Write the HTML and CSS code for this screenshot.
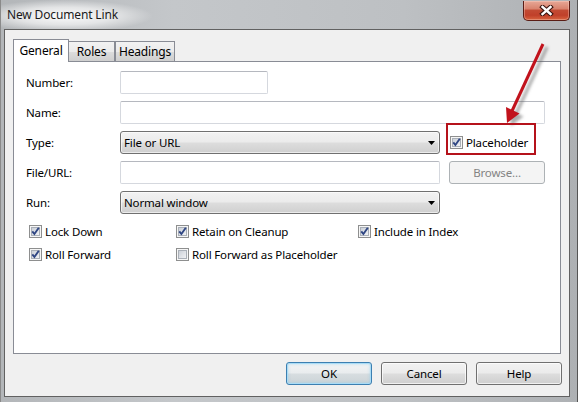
FILE: index.html
```html
<!DOCTYPE html>
<html>
<head>
<meta charset="utf-8">
<title>New Document Link</title>
<link rel="stylesheet" href="styles.css">
</head>
<body>
<svg class="defs" width="0" height="0">
  <defs>
    <linearGradient id="cbg" x1="0" y1="0" x2="1" y2="1">
      <stop offset="0" stop-color="#c9ced6"/>
      <stop offset="1" stop-color="#f3f4f6"/>
    </linearGradient>
  </defs>
</svg>
<div class="window">
  <div class="titlebar">
    <span class="title">New Document Link</span>
    <div class="close">
      <svg width="15" height="11" viewBox="0 0 15 11">
        <path d="M3.5 2 L11.5 9 M11.5 2 L3.5 9" stroke="#3a1510" stroke-width="4.6" stroke-linecap="square"/>
        <path d="M3.5 2 L11.5 9 M11.5 2 L3.5 9" stroke="#ffffff" stroke-width="2.4" stroke-linecap="square"/>
      </svg>
    </div>
  </div>
  <div class="client">
    <div class="tabs">
      <div class="tab active t-general">General</div>
      <div class="tab t-roles">Roles</div>
      <div class="tab t-headings">Headings</div>
    </div>
    <div class="pane">
      <div class="form">
        <div class="label">Number:</div>
        <div class="field w-number"></div>

        <div class="label">Name:</div>
        <div class="field span-all"></div>

        <div class="label">Type:</div>
        <div class="select"><span>File or URL</span><svg class="dd" width="7" height="4" viewBox="0 0 7 4"><path d="M0 0 H7 L3.5 4 Z" fill="#000"/></svg></div>
        <div class="gapcell"></div>
        <div class="check ph">
          <svg class="cb" width="13" height="13" viewBox="0 0 13 13"><rect x=".5" y=".5" width="12" height="12" fill="#f6f6f6" stroke="#8e8f8f"/><rect x="2.5" y="2.5" width="8" height="8" fill="url(#cbg)" stroke="#aab0b8"/><path d="M3.3 6.3 L5.4 9 L9.8 2.8" fill="none" stroke="#2f4683" stroke-width="1.9"/></svg>
          <span>Placeholder</span>
        </div>

        <div class="label">File/URL:</div>
        <div class="field"></div>
        <div class="gapcell"></div>
        <div class="button disabled">Browse...</div>

        <div class="label">Run:</div>
        <div class="select"><span>Normal window</span><svg class="dd" width="7" height="4" viewBox="0 0 7 4"><path d="M0 0 H7 L3.5 4 Z" fill="#000"/></svg></div>
      </div>

      <div class="checks">
        <div class="check">
          <svg class="cb" width="13" height="13" viewBox="0 0 13 13"><rect x=".5" y=".5" width="12" height="12" fill="#f6f6f6" stroke="#8e8f8f"/><rect x="2.5" y="2.5" width="8" height="8" fill="url(#cbg)" stroke="#aab0b8"/><path d="M3.3 6.3 L5.4 9 L9.8 2.8" fill="none" stroke="#2f4683" stroke-width="1.9"/></svg>
          <span>Lock Down</span>
        </div>
        <div class="check">
          <svg class="cb" width="13" height="13" viewBox="0 0 13 13"><rect x=".5" y=".5" width="12" height="12" fill="#f6f6f6" stroke="#8e8f8f"/><rect x="2.5" y="2.5" width="8" height="8" fill="url(#cbg)" stroke="#aab0b8"/><path d="M3.3 6.3 L5.4 9 L9.8 2.8" fill="none" stroke="#2f4683" stroke-width="1.9"/></svg>
          <span>Retain on Cleanup</span>
        </div>
        <div class="check">
          <svg class="cb" width="13" height="13" viewBox="0 0 13 13"><rect x=".5" y=".5" width="12" height="12" fill="#f6f6f6" stroke="#8e8f8f"/><rect x="2.5" y="2.5" width="8" height="8" fill="url(#cbg)" stroke="#aab0b8"/><path d="M3.3 6.3 L5.4 9 L9.8 2.8" fill="none" stroke="#2f4683" stroke-width="1.9"/></svg>
          <span>Include in Index</span>
        </div>
        <div class="check">
          <svg class="cb" width="13" height="13" viewBox="0 0 13 13"><rect x=".5" y=".5" width="12" height="12" fill="#f6f6f6" stroke="#8e8f8f"/><rect x="2.5" y="2.5" width="8" height="8" fill="url(#cbg)" stroke="#aab0b8"/><path d="M3.3 6.3 L5.4 9 L9.8 2.8" fill="none" stroke="#2f4683" stroke-width="1.9"/></svg>
          <span>Roll Forward</span>
        </div>
        <div class="check">
          <svg class="cb" width="13" height="13" viewBox="0 0 13 13"><rect x=".5" y=".5" width="12" height="12" fill="#f6f6f6" stroke="#8e8f8f"/><rect x="2.5" y="2.5" width="8" height="8" fill="url(#cbg)" stroke="#aab0b8"/></svg>
          <span>Roll Forward as Placeholder</span>
        </div>
      </div>
    </div>
    <div class="buttons">
      <div class="button default">OK</div>
      <div class="button">Cancel</div>
      <div class="button">Help</div>
    </div>
  </div>

  <svg class="annot" width="578" height="402" viewBox="0 0 578 402">
    <defs>
      <filter id="soft" x="-30%" y="-30%" width="160%" height="160%">
        <feGaussianBlur stdDeviation="1.6"/>
      </filter>
    </defs>
    <g transform="translate(4,3)" opacity="0.5" filter="url(#soft)">
      <line x1="543" y1="44" x2="512" y2="111" stroke="#5a5a5a" stroke-width="3.2"/>
      <polygon points="507,123 519.5,113.5 506,107" fill="#5a5a5a"/>
    </g>
    <line x1="543" y1="44" x2="512" y2="111" stroke="#c1121c" stroke-width="3"/>
    <polygon points="507,123 519.5,113.5 506,107" fill="#c1121c"/>
    <rect x="447" y="124" width="88" height="30" fill="none" stroke="#b5121b" stroke-width="2"/>
  </svg>
</div>
</body>
</html>
```

FILE: styles.css
```css
* { box-sizing: border-box; }
html, body { margin: 0; padding: 0; }
body {
  width: 578px;
  height: 402px;
  overflow: hidden;
  background: #fff;
  font-family: "Noto Sans", "Liberation Sans", sans-serif;
  font-size: 11.5px;
  letter-spacing: -0.15px;
  color: #000;
}
.defs { position: absolute; width: 0; height: 0; }

.window {
  position: relative;
  width: 578px;
  height: 402px;
  display: flex;
  flex-direction: column;
  background: linear-gradient(90deg, #b3b6b9 0%, #c4c7ca 30%, #bdc0c3 70%, #aeb1b4 100%);
  border-right: 1px solid #555;
  border-left: 1px solid #8a8a8a;
}

.titlebar {
  height: 29px;
  display: flex;
  justify-content: space-between;
  align-items: flex-start;
  background: radial-gradient(ellipse 90px 16px at 62px 16px, rgba(255,255,255,0.95) 0%, rgba(255,255,255,0.6) 55%, rgba(255,255,255,0) 100%);
}
.title {
  margin: 7px 0 0 6px;
  line-height: 16px;
  font-size: 12px;
  color: #1a1a1a;
}
.close {
  width: 47px;
  height: 20px;
  margin: 1px 7px 0 0;
  border: 1px solid #5a1d15;
  border-top: none;
  border-radius: 0 0 5px 5px;
  background: linear-gradient(180deg, #e7a897 0%, #d9846f 40%, #c24a33 50%, #c0402a 75%, #d8643f 100%);
  box-shadow: inset 0 0 0 1px rgba(255,220,210,0.35);
  display: flex;
  align-items: center;
  justify-content: center;
}

.client {
  margin: 0 0 5px 3px;
  width: 566px;
  height: 368px;
  border: 1px solid #616161;
  background: #f0f0f0;
  padding: 9px 0 0 8px;
}

.tabs {
  display: flex;
  align-items: flex-end;
  height: 22px;
}
.tab {
  height: 20px;
  border: 1px solid #898c95;
  border-bottom: none;
  background: linear-gradient(180deg, #f2f2f2 0%, #ebebeb 50%, #dddddd 51%, #cfcfcf 100%);
  display: flex;
  align-items: center;
  justify-content: center;
  line-height: 16px;
  font-size: 12px;
}
.tab.active {
  height: 23px;
  margin-bottom: -1px;
  background: #fff;
  position: relative;
  z-index: 1;
  padding-bottom: 1px;
}
.t-general { width: 56px; }
.t-roles { width: 46px; border-left: none; }
.t-headings { width: 60px; }

.pane {
  width: 548px;
  height: 293px;
  border: 1px solid #898c95;
  background: #fff;
  padding: 9px 0 0 12px;
}

.form {
  display: grid;
  grid-template-columns: 94px 320px 9px 96px;
  grid-auto-rows: 23px;
  row-gap: 7px;
}
.label {
  grid-column: 1;
  display: flex;
  align-items: center;
  line-height: 16px;
}
.field {
  height: 23px;
  background: #fff;
  border: 1px solid #d5d8de;
  border-top-color: #b5b8bf;
  border-radius: 2px;
}
.w-number { width: 148px; }
.span-all { grid-column: 2 / 5; }
.gapcell { width: 9px; }

.select {
  height: 23px;
  border: 1px solid #707070;
  border-radius: 3px;
  background: linear-gradient(180deg, #f2f2f2 0%, #ebebeb 48%, #dddddd 52%, #cfcfcf 100%);
  box-shadow: inset 0 0 0 1px rgba(255,255,255,0.6);
  display: flex;
  align-items: center;
  justify-content: space-between;
  padding: 0 4px 0 3px;
  line-height: 16px;
}
.dd { display: block; }

.check {
  display: flex;
  align-items: center;
  gap: 3px;
  line-height: 16px;
}
.cb { display: block; flex: none; }
.ph { padding-left: 1px; }

.button {
  height: 23px;
  border: 1px solid #707070;
  border-radius: 3px;
  background: linear-gradient(180deg, #f2f2f2 0%, #ebebeb 48%, #dddddd 52%, #cfcfcf 100%);
  box-shadow: inset 0 0 0 1px rgba(255,255,255,0.7);
  display: flex;
  align-items: center;
  justify-content: center;
  line-height: 16px;
}
.button.disabled {
  border-color: #adb2b5;
  background: #f4f4f4;
  box-shadow: none;
  color: #838383;
}
.button.default {
  border-color: #3c7fb1;
  box-shadow: inset 0 0 0 1px #a9dcf6, inset 0 0 3px 1px rgba(120,200,240,0.5);
  background: linear-gradient(180deg, #f2f4f5 0%, #e9ecee 48%, #d7dde0 52%, #cbd3d7 100%);
}

.checks {
  display: grid;
  grid-template-columns: 147px 182px auto;
  grid-auto-rows: 17px;
  row-gap: 6px;
  margin: 9px 0 0 3px;
}

.buttons {
  display: flex;
  justify-content: flex-end;
  gap: 9px;
  width: 549px;
  margin-top: 8px;
}
.buttons .button { width: 86px; }

.annot {
  position: absolute;
  left: -1px;
  top: 0;
  pointer-events: none;
}
```
